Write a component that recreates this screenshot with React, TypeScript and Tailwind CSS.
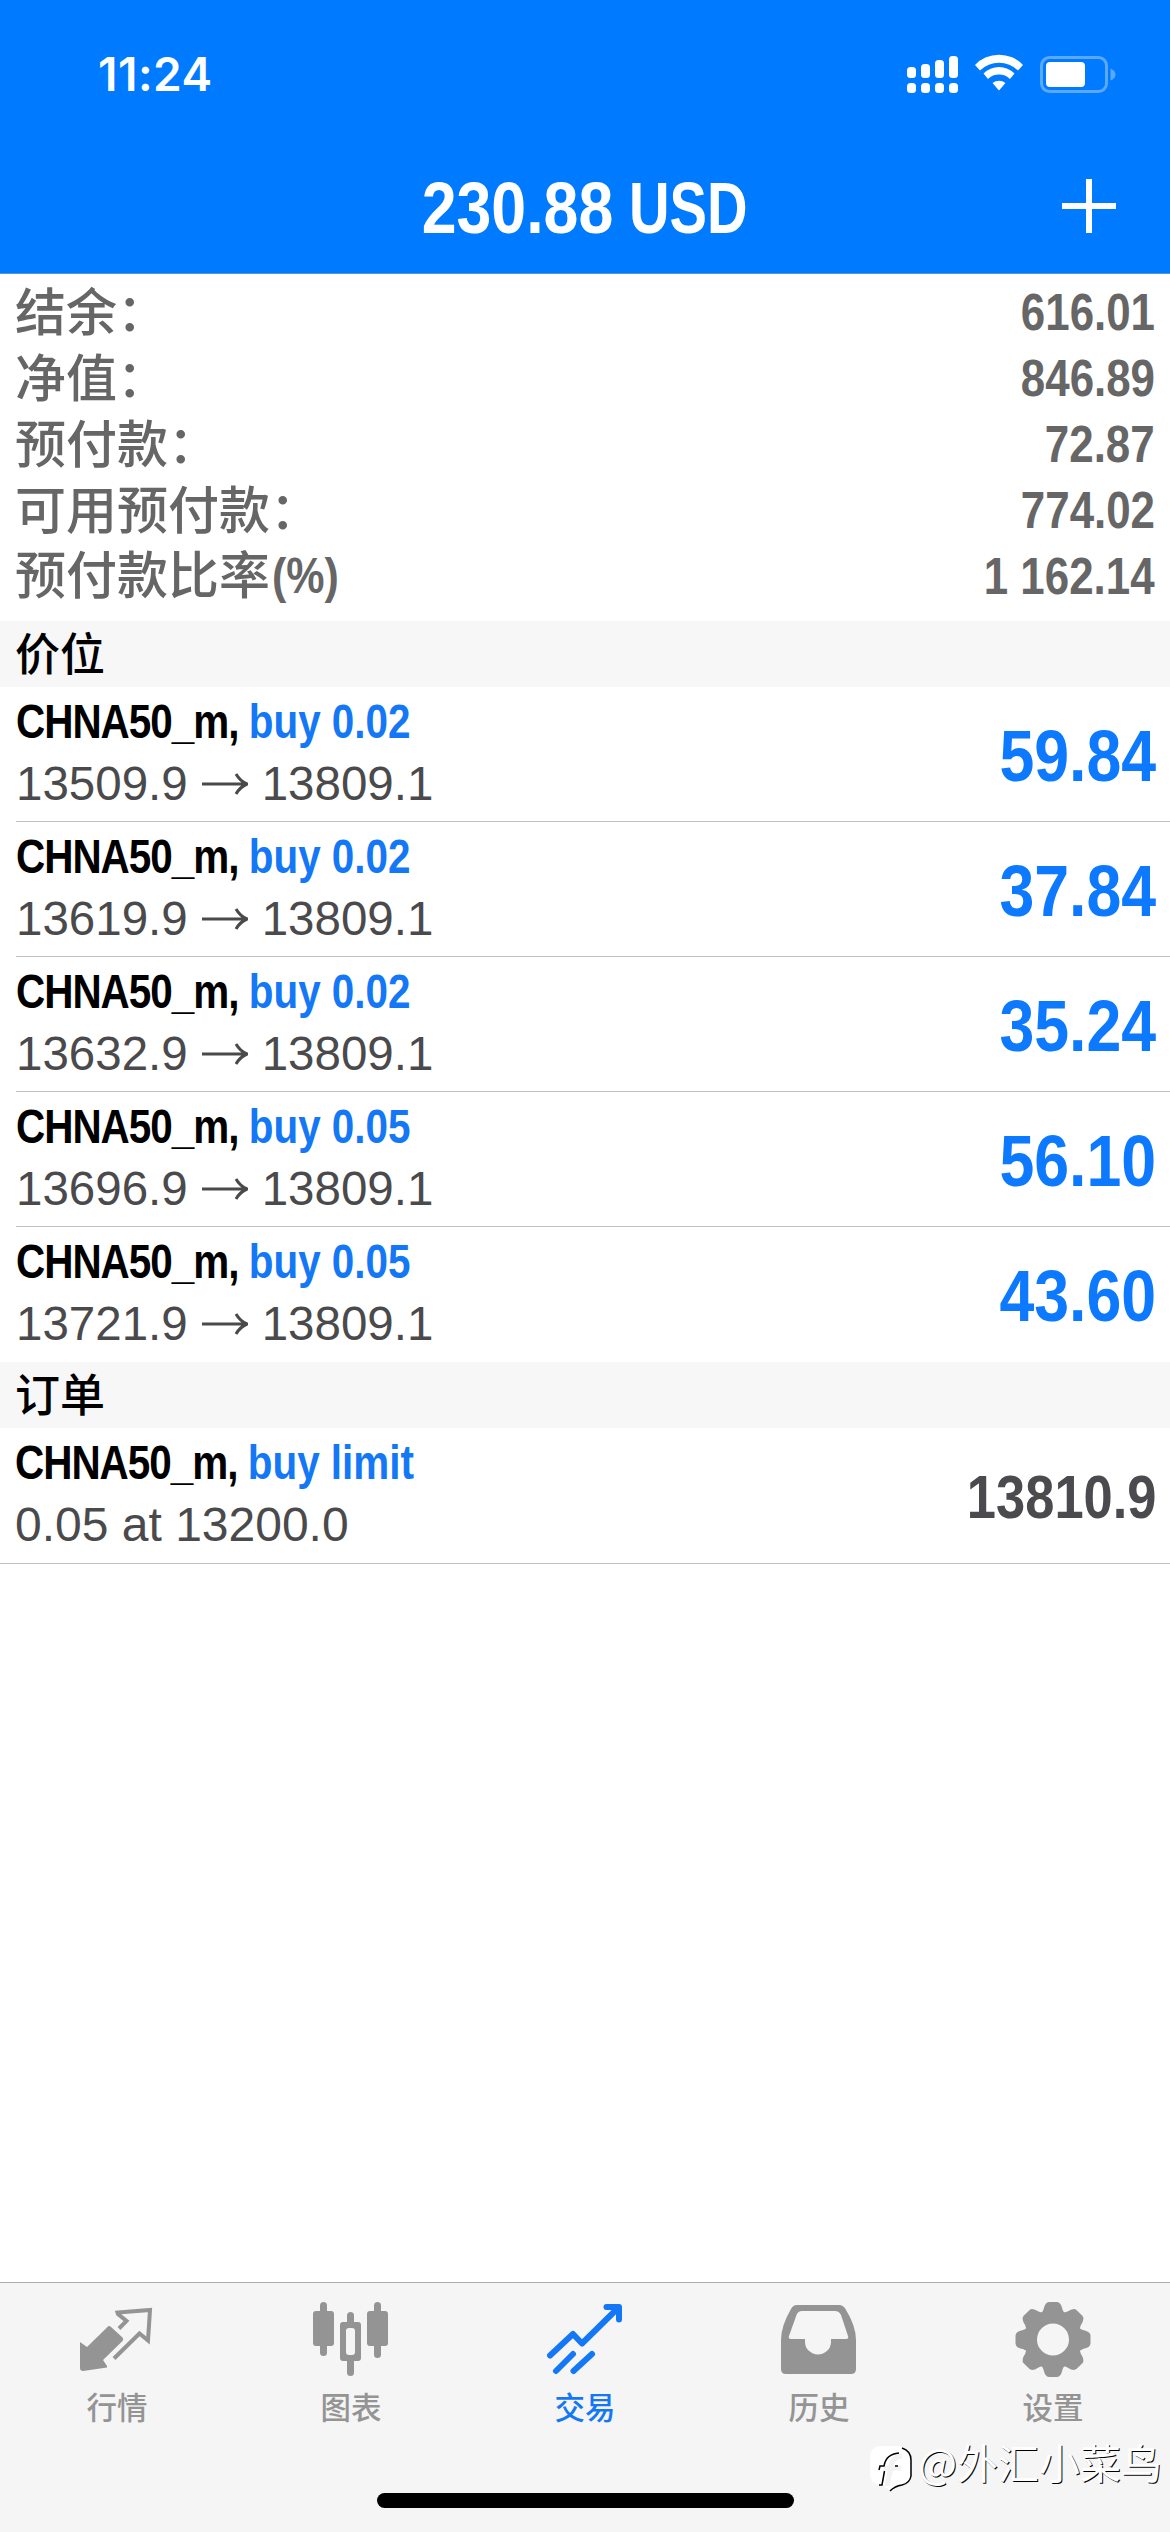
import type { ReactNode } from "react"

const summary = [
  { label: "结余：", value: "616.01" },
  { label: "净值：", value: "846.89" },
  { label: "预付款：", value: "72.87" },
  { label: "可用预付款：", value: "774.02" },
  { label: "预付款比率", unit: "(%)", value: "1 162.14" },
]

const positions = [
  { volume: "0.02", open: "13509.9", current: "13809.1", profit: "59.84" },
  { volume: "0.02", open: "13619.9", current: "13809.1", profit: "37.84" },
  { volume: "0.02", open: "13632.9", current: "13809.1", profit: "35.24" },
  { volume: "0.05", open: "13696.9", current: "13809.1", profit: "56.10" },
  { volume: "0.05", open: "13721.9", current: "13809.1", profit: "43.60" },
]

function StatusIcons() {
  return (
    <svg width="212" height="46" viewBox="0 0 212 46" fill="#fff">
      <rect x="0" y="15" width="9" height="11" rx="3.5" />
      <rect x="14" y="12" width="9" height="14" rx="3.5" />
      <rect x="28" y="8" width="9" height="18" rx="3.5" />
      <rect x="42" y="4" width="9" height="22" rx="3.5" />
      <rect x="0" y="31" width="9" height="10" rx="3.5" />
      <rect x="14" y="31" width="9" height="10" rx="3.5" />
      <rect x="28" y="31" width="9" height="10" rx="3.5" />
      <rect x="42" y="31" width="9" height="10" rx="3.5" />
      <path d="M68 13A33 33 0 0 1 116 13L111 18.500A27 27 0 0 0 73 18.500Z" />
      <path d="M76.500 21.500A22 22 0 0 1 107.500 21.500L103 27A16 16 0 0 0 81 27Z" />
      <path d="M85.500 31A10.500 10.500 0 0 1 98.500 31L92 38.500Z" />
      <rect x="134.500" y="5.500" width="65" height="34" rx="8" fill="none" stroke="#5ba8ff" strokeWidth="3" />
      <rect x="139" y="10" width="39" height="25" rx="4" />
      <path d="M203.500 16.500Q208.500 18.500 208.500 22.500Q208.500 26.500 203.500 28.500Z" fill="#5ba8ff" />
    </svg>
  )
}

function SectionTitle({ children }: { children: ReactNode }) {
  return <h2 className="flex h-[66px] items-center bg-[#f7f7f7] pt-[3px] pl-[15px] text-[45px] leading-none font-medium text-black">{children}</h2>
}

function Symbol({ side }: { side: string }) {
  return (
    <p className="mt-1 h-[62px] origin-left scale-x-[0.825] text-[49px] leading-[60px] font-bold whitespace-nowrap text-black">
      <span className="tracking-[-1.2px]">CHNA50_m, </span>
      <span className="text-[#1478f6]">{side}</span>
    </p>
  )
}

function QuotesIcon() {
  return (
    <svg width="76" height="76" viewBox="0 0 76 76">
      <path d="M1 40L8 45L28 25.500Q30 23 32 25L43.500 35.500Q45 37 43.500 39L24 58L28 64V65.500L4 69Q1 69 1 66Z" fill="#949494" />
      <path d="M40 26.500L47.500 19L39 12L38.500 10.500L71 8L69 38.500L60.500 31.500L35 56.500" fill="none" stroke="#949494" strokeWidth="4" />
    </svg>
  )
}

function ChartIcon() {
  return (
    <svg width="76" height="76" viewBox="1 0 76 76" fill="#949494">
      <rect x="8" y="0" width="7" height="54" rx="3.500" />
      <rect x="1" y="9" width="21" height="35" rx="3" />
      <rect x="62" y="0" width="7" height="56" rx="3.500" />
      <rect x="55" y="9" width="21" height="35" rx="3" />
      <rect x="35" y="10" width="7" height="16" rx="3.500" />
      <rect x="35" y="54" width="7" height="20" rx="3.500" />
      <path fillRule="evenodd" d="M31 20H46Q49 20 49 23V56Q49 59 46 59H31Q28 59 28 56V23Q28 20 31 20ZM37 26Q34 26 34 29V50Q34 53 37 53H40Q43 53 43 50V29Q43 26 40 26Z" />
    </svg>
  )
}

function TradeIcon() {
  return (
    <svg width="76" height="76" viewBox="0 0 76 76" fill="none" stroke="#1478f6" strokeWidth="6" strokeLinecap="round" strokeLinejoin="round">
      <path d="M3 53.500L26 32L35 41.500L71 6" />
      <path d="M59.500 5H72V17.500" />
      <path d="M9 69L26 52M26.500 69L45 52" />
    </svg>
  )
}

function HistoryIcon() {
  return (
    <svg width="76" height="76" viewBox="1 0 76 76" fill="#949494">
      <path
        fillRule="evenodd"
        d="M17 3H59Q63 3 65.500 7Q76 24 76 38V67Q76 72 71 72H6Q1 72 1 67V38Q1 24 11 7Q13 3 17 3ZM22 9Q18 9 16.500 13L9 34Q8 37 11 37H25V40A13 12.500 0 0 0 51 40V37H66Q69 37 68 34L61 13Q59 9 55 9Z"
      />
    </svg>
  )
}

function SettingsIcon() {
  const teeth = [0, 45, 90, 135, 180, 225, 270, 315]
  return (
    <svg width="76" height="76" viewBox="-38 -37.500 76 76" fill="#949494">
      {teeth.map((angle) => (
        <path key={angle} transform={`rotate(${angle})`} d="M-13 -25Q-10.500 -27 -9.500 -30Q-8 -37.500 -4 -37.500H4Q8 -37.500 9.500 -30Q10.500 -27 13 -25V-20H-13Z" />
      ))}
      <circle r="22.500" fill="none" stroke="#949494" strokeWidth="13" />
    </svg>
  )
}

const tabs = [
  { label: "行情", icon: <QuotesIcon /> },
  { label: "图表", icon: <ChartIcon /> },
  { label: "交易", icon: <TradeIcon />, active: true },
  { label: "历史", icon: <HistoryIcon /> },
  { label: "设置", icon: <SettingsIcon /> },
]

export default function App() {
  return (
    <div className="relative flex h-[2532px] w-[1170px] flex-col overflow-hidden bg-white font-['Liberation_Sans','Noto_Sans_CJK_SC',sans-serif]">
      <header className="h-[274px] border-b border-[#5b93cf] bg-[#007aff] text-white">
        <div className="flex h-[150px] items-center justify-between pr-[51px] pl-[98px]">
          <span className="pb-[2px] font-['Inter',sans-serif] text-[46px] leading-none font-semibold tracking-[0.5px]">11:24</span>
          <StatusIcons />
        </div>
        <div className="grid h-[115px] grid-cols-[120px_1fr_120px] items-center">
          <span />
          <h1 className="flex justify-center gap-4 pl-1 text-[72px] leading-none font-bold">
            <span className="origin-right scale-x-[0.87]">230.88</span>
            <span className="origin-left scale-x-[0.78]">USD</span>
          </h1>
          <svg width="54" height="54" viewBox="0 0 54 54" className="mb-[3px] ml-[12px]" stroke="#fff" strokeWidth="6">
            <path d="M27 0V54M0 27H54" />
          </svg>
        </div>
      </header>

      <section className="h-[347px] pt-[5px] text-[#666]">
        {summary.map((row) => (
          <div key={row.label} className="flex h-[66px] items-center justify-between pr-[15px] pl-[15px]">
            <span className="flex pb-[5px] font-['Noto_Sans_CJK_SC',sans-serif] text-[51px] leading-none font-medium">
              {row.label}
              {row.unit && <span className="mt-[4px] ml-[2px] origin-left scale-x-[0.86] font-['Liberation_Sans',sans-serif] text-[50px] font-bold">{row.unit}</span>}
            </span>
            <span className="origin-right scale-x-[0.86] text-[51px] leading-none font-bold">{row.value}</span>
          </div>
        ))}
      </section>

      <SectionTitle>价位</SectionTitle>
      {positions.map((position, index) => (
        <div key={position.open} className="h-[135px] pl-4">
          <div className={`flex h-full justify-between pr-[14px] ${index < positions.length - 1 ? "border-b border-[#c0c0c2]" : ""}`}>
            <div>
              <Symbol side={`buy ${position.volume}`} />
              <p className="flex items-center text-[47.5px] leading-[62px] text-[#4a4a4c]">
                {position.open}
                <svg width="46" height="22" viewBox="0 0 46 22" className="mr-[14px] ml-[14px]" fill="none" stroke="#4a4a4c" strokeWidth="3">
                  <path d="M0 11H44M34 1Q38 8 45 11Q38 14 34 21" />
                </svg>
                {position.current}
              </p>
            </div>
            <span className="origin-right scale-x-[0.87] self-center pt-[3px] text-[72px] leading-none font-bold text-[#0c79fe]">{position.profit}</span>
          </div>
        </div>
      ))}

      <SectionTitle>订单</SectionTitle>
      <div className="flex h-[136px] justify-between border-b border-[#c0c0c2] pr-[14px] pl-[15px]">
        <div>
          <Symbol side="buy limit" />
          <p className="text-[48px] leading-[62px] text-[#4a4a4c]">0.05 at 13200.0</p>
        </div>
        <span className="origin-right scale-x-[0.86] self-center pt-[3px] text-[61px] leading-none font-bold text-[#4a4a4f]">13810.9</span>
      </div>

      <nav className="mt-auto h-[250px] border-t border-[#adadad] bg-[#f5f5f5] pt-[19px]">
        <div className="grid grid-cols-5">
          {tabs.map((tab) => (
            <div
              key={tab.label}
              className={`flex flex-col items-center gap-[9px] font-['Noto_Sans_CJK_SC',sans-serif] text-[30.5px] leading-[38px] font-medium ${tab.active ? "text-[#1478f6]" : "text-[#949494]"}`}
            >
              {tab.icon}
              <span>{tab.label}</span>
            </div>
          ))}
        </div>
      </nav>

      <div className="absolute bottom-[24px] left-[377px] h-[15px] w-[417px] rounded-full bg-black" />
      <div className="absolute right-[8px] bottom-[40px] flex items-start gap-1 text-white">
        <svg width="44" height="46" viewBox="0 0 44 46">
          <path d="M12 0H28Q40 0 40 12V28Q40 37 31 38Q24 39 19 44L13 39H12Q0 39 0 27V12Q0 0 12 0Z" fill="#fff" />
          <path d="M17 40L21 21Q22 11 32 10M14 22H31" fill="none" stroke="#f2f2f2" strokeWidth="5" />
          <path d="M32 2Q41 5 41 14V30Q40 37 32 39Q25 40 20 45M9 24L10 20H14Q16 8 29 7M14.500 25L12 39H9M25 20H28" fill="none" stroke="#000" strokeWidth="1.500" />
        </svg>
        <span className="-mt-[10px] font-['Noto_Sans_CJK_SC',sans-serif] text-[41px] leading-[50px] [text-shadow:1px_1px_0_#000]">@外汇小菜鸟</span>
      </div>
    </div>
  )
}
